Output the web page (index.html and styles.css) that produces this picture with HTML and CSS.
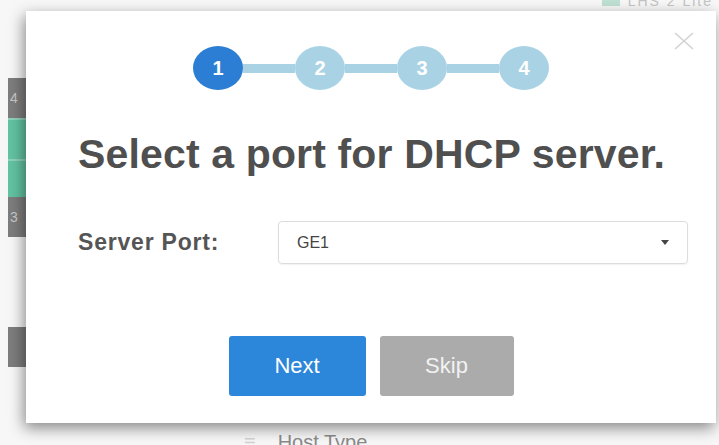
FILE: index.html
```html
<!DOCTYPE html>
<html lang="en">
<head>
    <meta charset="UTF-8">
    <meta name="viewport" content="width=device-width, initial-scale=1.0">
    <title>DHCP Wizard</title>
    <link rel="stylesheet" href="styles.css">
</head>
<body>
    <div class="page">
        <div class="topbar">
            <span class="topbar-icon"></span>
            <span class="topbar-text">LHS 2 Lite</span>
        </div>

        <div class="rows">
            <div class="row-tag dark">4</div>
            <div class="row-tag green"></div>
            <div class="row-tag green second"></div>
            <div class="row-tag dark">3</div>
            <div class="row-gap"></div>
            <div class="row-tag dark"></div>
        </div>

        <div class="host-row">
            <span class="host-mark">≡</span>
            <span>Host Type</span>
        </div>
    </div>

    <div class="modal">
        <button class="modal-close" aria-label="Close">
            <svg viewBox="0 0 22 18" width="22" height="18">
                <path d="M2 1 L20 17 M20 1 L2 17" stroke="#d2d2d2" stroke-width="1.6" fill="none"/>
            </svg>
        </button>

        <div class="steps">
            <div class="step active">1</div>
            <div class="step-line"></div>
            <div class="step">2</div>
            <div class="step-line"></div>
            <div class="step">3</div>
            <div class="step-line"></div>
            <div class="step">4</div>
        </div>

        <h1 class="modal-title">Select a port for DHCP server.</h1>

        <div class="field">
            <label class="field-label">Server Port:</label>
            <div class="select">
                <span>GE1</span>
                <span class="caret"></span>
            </div>
        </div>

        <div class="actions">
            <button class="btn btn-primary">Next</button>
            <button class="btn btn-muted">Skip</button>
        </div>
    </div>
</body>
</html>
```

FILE: styles.css
```css
* {
    margin: 0;
    padding: 0;
    box-sizing: border-box;
}

body {
    font-family: "Liberation Sans", Arial, sans-serif;
    background-color: #f7f7f7;
    width: 719px;
    height: 445px;
    overflow: hidden;
    position: relative;
}

/* page behind the dialog */
.page {
    height: 445px;
    display: flex;
    flex-direction: column;
}

.topbar {
    height: 12px;
    display: flex;
    justify-content: flex-end;
    align-items: flex-start;
    gap: 8px;
    padding-right: 6px;
    overflow: hidden;
}

.topbar-icon {
    width: 18px;
    height: 8px;
    margin-top: -2px;
    background-color: #bfe0d2;
}

.topbar-text {
    font-size: 14px;
    line-height: 14px;
    margin-top: -6px;
    letter-spacing: 2px;
    color: #c4c4c4;
}

.rows {
    padding-top: 66px;
    padding-left: 8px;
    display: flex;
    flex-direction: column;
    width: 30px;
}

.row-tag {
    height: 40px;
    color: #c9c9c9;
    font-size: 14px;
    padding-left: 2px;
    line-height: 40px;
}

.row-tag.dark {
    background-color: #7d7d7d;
}

.row-tag.green {
    height: 41px;
    background-color: #62c3a2;
    border-top: 2px solid #8fd3bb;
}

.row-tag.green.second {
    height: 38px;
}

.row-gap {
    height: 90px;
}

.host-row {
    margin-top: auto;
    display: flex;
    align-items: center;
    gap: 22px;
    padding-left: 244px;
    margin-bottom: -8px;
    height: 22px;
    font-size: 20px;
    color: #8a8a8a;
}

.host-mark {
    color: #d2d2d2;
}

/* dialog */
.modal {
    position: absolute;
    top: 11px;
    left: 26px;
    width: 690px;
    height: 412px;
    background-color: #ffffff;
    box-shadow: -2px 5px 14px rgb(0 0 0 / 0.45);
    padding-top: 35px;
}

.modal-close {
    position: absolute;
    top: 21px;
    right: 21px;
    border: none;
    background: none;
    width: 22px;
    height: 18px;
    display: flex;
}

.steps {
    display: flex;
    justify-content: center;
    align-items: center;
}

.step {
    width: 50px;
    height: 44px;
    border-radius: 50%;
    background-color: #a9d3e4;
    color: #ffffff;
    font-size: 20px;
    font-weight: 700;
    display: flex;
    justify-content: center;
    align-items: center;
}

.step.active {
    background-color: #2b7ed3;
}

.step-line {
    width: 52px;
    height: 9px;
    background-color: #a9d3e4;
}

.modal-title {
    margin-top: 40px;
    padding-left: 52px;
    font-size: 41px;
    line-height: 48px;
    font-weight: 700;
    color: #4f4f4f;
    letter-spacing: 0.15px;
}

.field {
    margin-top: 43px;
    display: flex;
    align-items: center;
    padding-left: 52px;
}

.field-label {
    width: 200px;
    font-size: 23px;
    font-weight: 700;
    color: #555555;
    letter-spacing: 0.8px;
}

.select {
    width: 410px;
    height: 43px;
    border: 1px solid #dcdcdc;
    border-radius: 4px;
    display: flex;
    align-items: center;
    justify-content: space-between;
    padding: 0 18px 0 18px;
    font-size: 16px;
    color: #444444;
    box-shadow: 0 1px 2px rgb(0 0 0 / 0.06);
}

.caret {
    width: 0;
    height: 0;
    border-left: 4px solid transparent;
    border-right: 4px solid transparent;
    border-top: 5px solid #444444;
}

.actions {
    margin-top: 72px;
    display: flex;
    justify-content: center;
    gap: 14px;
}

.btn {
    width: 137px;
    height: 60px;
    border: none;
    border-radius: 3px;
    font-family: inherit;
    font-size: 22px;
    color: #ffffff;
}

.btn-primary {
    background-color: #2c86d9;
}

.btn-muted {
    width: 134px;
    background-color: #ababab;
    color: #f2f2f2;
}
```
